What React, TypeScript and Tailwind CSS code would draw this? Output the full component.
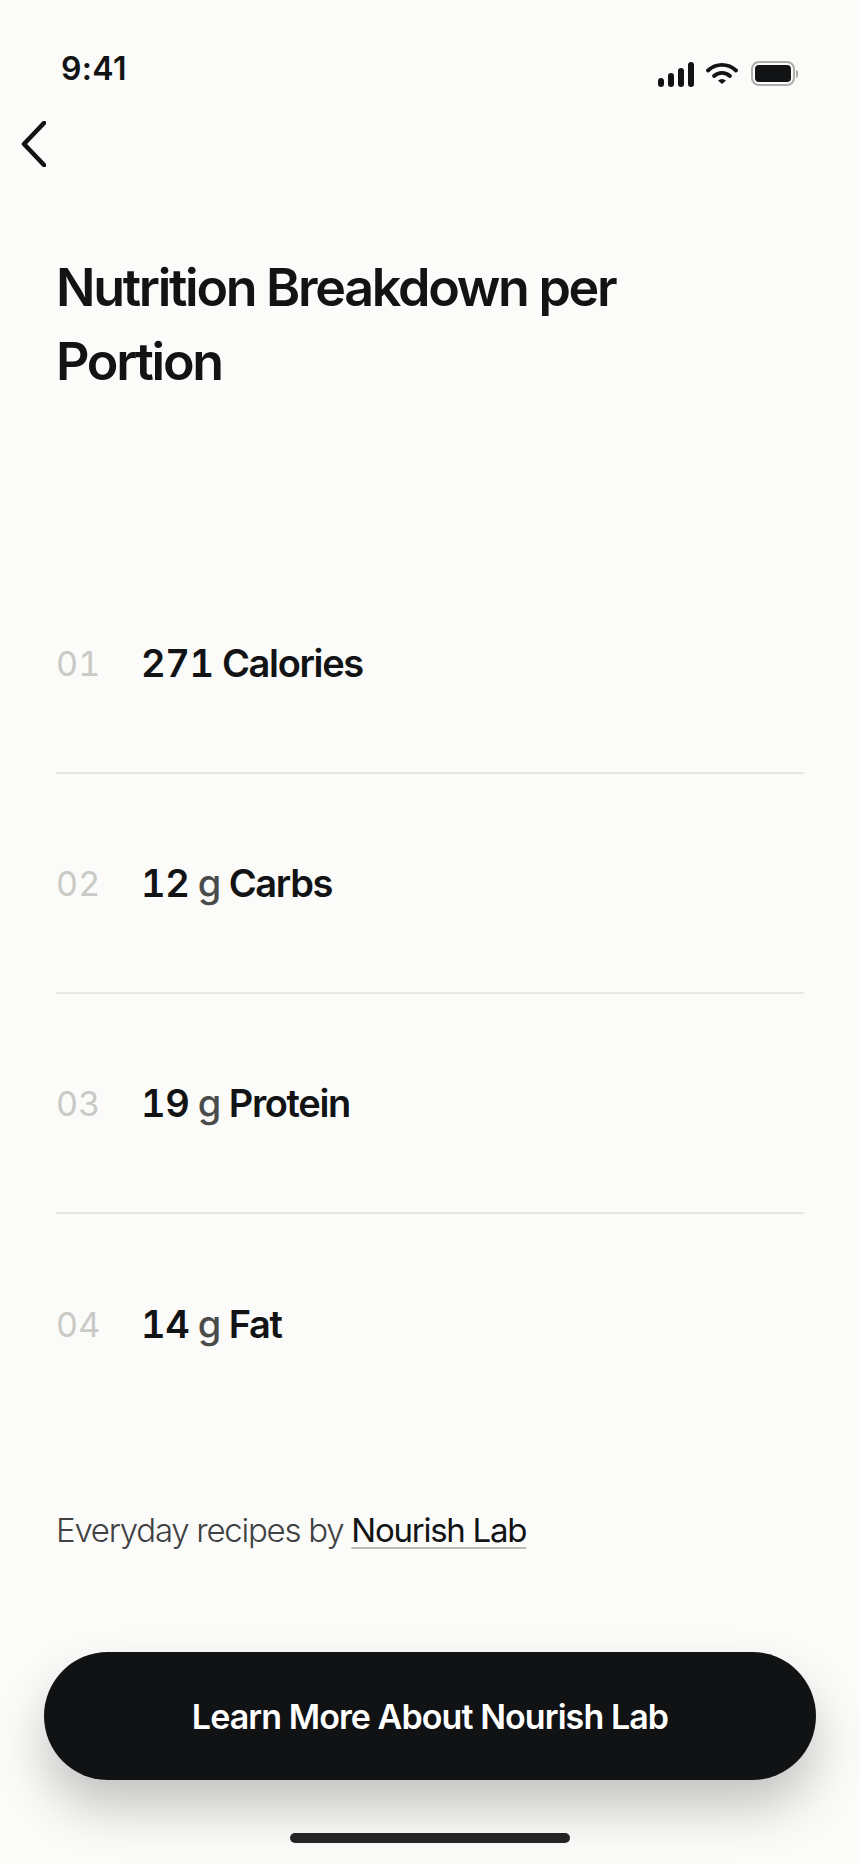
const rows = [
  { num: "01", value: "271", unit: "", label: "Calories" },
  { num: "02", value: "12", unit: "g", label: "Carbs" },
  { num: "03", value: "19", unit: "g", label: "Protein" },
  { num: "04", value: "14", unit: "g", label: "Fat" },
]

function StatusIcons() {
  return (
    <div className="flex items-start">
      <svg width="36" height="25" viewBox="0 0 36 25" className="mt-[1px]">
        <rect x="0" y="16" width="6" height="9" rx="3" fill="#111314" />
        <rect x="10" y="11" width="6" height="14" rx="3" fill="#111314" />
        <rect x="20" y="6" width="6" height="19" rx="3" fill="#111314" />
        <rect x="30" y="0" width="6" height="25" rx="3" fill="#111314" />
      </svg>
      <svg width="32" height="22" viewBox="0 0 32 22" className="ml-3 mt-[1px]" fill="none">
        <path d="M2 8.5C10 1 22 1 30 8.5" stroke="#111314" strokeWidth="3.8" strokeLinecap="round" />
        <path d="M8 14C12.5 9.8 19.5 9.8 24 14" stroke="#111314" strokeWidth="3.8" strokeLinecap="round" />
        <path d="M12 18.5L16 22L20 18.5C17.5 16.5 14.5 16.5 12 18.5Z" fill="#111314" />
      </svg>
      <div className="ml-[13px] flex items-center">
        <div className="flex h-[25px] w-[44px] items-center justify-center rounded-[8px] border-[2px] border-[#aeaeac]">
          <div className="h-[17px] w-[36px] rounded-[4px] bg-[#111314]" />
        </div>
        <div className="ml-[1px] h-[8px] w-[2px] rounded-r-full bg-[#aeaeac]" />
      </div>
    </div>
  )
}

export default function App() {
  return (
    <div className="flex h-[1864px] w-[860px] flex-col overflow-hidden bg-[#fbfbf9] font-['Inter',sans-serif] text-[#111314]">
      <div className="flex items-start justify-between pl-[61px] pr-[62px] pt-[50px]">
        <span className="text-[32px] font-semibold leading-[38px] tracking-[0.01em]">9:41</span>
        <div className="pt-[11px]">
          <StatusIcons />
        </div>
      </div>

      <button className="ml-[20px] mt-[33px] block h-[46px] w-[26px]">
        <svg width="26" height="46" viewBox="0 0 26 46" fill="none">
          <path d="M24 2L4 23L24 44" stroke="#111314" strokeWidth="4.6" strokeLinecap="round" strokeLinejoin="round" />
        </svg>
      </button>

      <h1 className="ml-[56px] mt-[84px] w-[640px] text-[52px] font-semibold leading-[74px] tracking-[-0.044em]">
        Nutrition Breakdown per Portion
      </h1>

      <div className="mx-[56px] mt-[155px]">
        {rows.map((row, i) => (
          <div
            key={row.num}
            className={
              i < 3
                ? "flex h-[220px] items-center border-b-2 border-[#e6e6e3]"
                : "flex h-[220px] items-center"
            }
          >
            <span className="w-[85px] text-[34px] font-normal tabular-nums tracking-[0.005em] text-[#c9c9c6]">
              {row.num}
            </span>
            <span className="text-[38px] font-semibold tracking-[-0.035em]">
              <span className="tabular-nums tracking-[-0.01em]">{row.value}</span>{" "}
              {row.unit && <span className="font-medium text-[#4a4c4c]">{row.unit} </span>}
              {row.label}
            </span>
          </div>
        ))}
      </div>

      <p className="ml-[56px] mt-[74px] text-[33px] font-light leading-[44px] tracking-[-0.038em] text-[#3f4142]">
        Everyday recipes by{" "}
        <span className="font-normal text-[#111314] underline decoration-[#b9bab8] decoration-2 underline-offset-[5px] [text-decoration-skip-ink:none]">
          Nourish Lab
        </span>
      </p>

      <button className="mx-[44px] mt-[100px] flex h-[128px] items-center justify-center rounded-full bg-[#101213] text-[34px] font-semibold tracking-[-0.027em] text-white shadow-[0_28px_50px_rgba(0,0,0,0.22)]">
        Learn More About Nourish Lab
      </button>

      <div className="mx-auto mt-[53px] h-[10px] w-[280px] rounded-full bg-[#232425]" />
    </div>
  )
}
